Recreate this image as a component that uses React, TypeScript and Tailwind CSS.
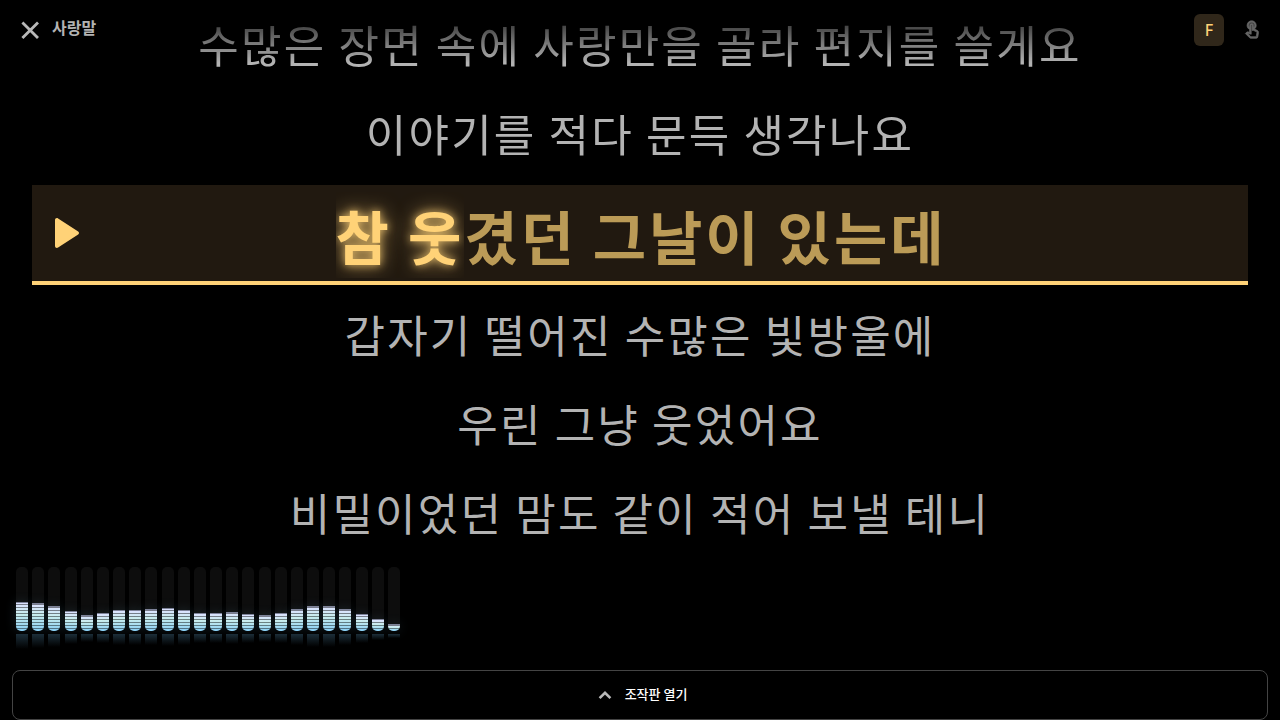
const before = ["수많은 장면 속에 사랑만을 골라 편지를 쓸게요", "이야기를 적다 문득 생각나요"];
const after = ["갑자기 떨어진 수많은 빛방울에", "우린 그냥 웃었어요", "비밀이었던 맘도 같이 적어 보낼 테니"];
const levels = [29, 28, 25, 20, 16, 18, 21, 21, 22, 23, 21, 18, 18, 19, 17, 16, 18, 22, 25, 25, 22, 17, 12, 7];

function CloseIcon() {
  return (
    <svg className="size-7" viewBox="0 0 28 28" fill="none" stroke="currentColor" strokeWidth="2.8" aria-hidden="true">
      <path d="M6.4 6.4l15.6 15.6M22 6.4L6.4 22" />
    </svg>
  );
}

function ChevronUpIcon() {
  return (
    <svg className="size-6 text-[#b8b8b8]" viewBox="0 0 24 24" fill="none" stroke="currentColor" strokeWidth="2.6" aria-hidden="true">
      <path d="M6.6 15.2l5.4-5.4 5.4 5.4" />
    </svg>
  );
}

function TouchIcon() {
  return (
    <svg className="size-5" viewBox="0 0 24 24" fill="currentColor" stroke="currentColor" strokeWidth="0.8" aria-hidden="true">
      <path d="M18.19 12.44l-3.24-1.62c1.29-1 2.12-2.56 2.12-4.32 0-3.03-2.47-5.5-5.5-5.5s-5.5 2.47-5.5 5.5c0 2.13 1.22 3.98 3 4.89v3.26c-2.15-.46-2.02-.44-2.26-.44-.53 0-1.03.21-1.41.59L4 16.22l5.09 5.09c.43.44 1.03.69 1.65.69h6.3c.98 0 1.81-.7 1.97-1.67l.8-4.71c.22-1.3-.43-2.58-1.62-3.18zm-.35 2.85l-.8 4.71h-6.3c-.09 0-.17-.04-.24-.1l-3.68-3.68 4.25.89V6.5c0-.28.22-.5.5-.5s.5.22.5.5v6h1.76l3.46 1.73c.4.2.62.63.55 1.06zM8.07 6.5c0-1.93 1.57-3.5 3.5-3.5s3.5 1.57 3.5 3.5c0 .95-.38 1.81-1 2.44V6.5c0-1.38-1.12-2.5-2.5-2.5s-2.5 1.12-2.5 2.5v2.44c-.62-.63-1-1.49-1-2.44z" />
    </svg>
  );
}

function Line({ text }: { text: string }) {
  return (
    <p className="h-[89px] text-center text-[44px] leading-[83px] tracking-wider whitespace-nowrap text-[#b3b3b3]">
      {text}
    </p>
  );
}

function ActiveLine() {
  return (
    <div className="relative mt-1 mb-2 flex h-[100px] items-center justify-center border-b-4 border-[#ffd277] bg-[#211910] pt-1 pl-0.5">
      <svg className="absolute top-[33px] left-[23px] h-[30px] w-6" viewBox="0 0 24 30" aria-hidden="true">
        <path d="M0 2C0 .3 1.7-.5 3.1.4l19.7 12.8c1.6 1 1.6 2.6 0 3.6L3.1 29.6C1.7 30.5 0 29.7 0 28z" fill="#ffd277" />
      </svg>
      <p className="text-[58px] leading-[86px] font-bold tracking-wider whitespace-nowrap text-[#bb9b57]">
        <span className="inline-block overflow-hidden align-top text-[#ffd277] [text-shadow:0_0_8px_#ffd277cc,0_0_20px_#ffd277b3]">
          참 웃
        </span>
        겼던 그날이 있는데
      </p>
    </div>
  );
}

function Spectrum() {
  return (
    <div className="relative ml-4 flex h-[82px] w-96 justify-between" role="img" aria-label="오디오 스펙트럼">
      {levels.map((level, i) => (
        <div key={i} className="flex w-3 flex-col">
          <div className="flex h-16 items-end rounded-[5px] bg-[#0d0d0d]">
            <div
              className="w-full overflow-hidden rounded-b-[5px] border-t border-[#7d8298] bg-linear-to-t from-[#87cdf3] via-[#c9eeee] via-60% to-[#dce2ff] shadow-[0_0_12px_#87cdf326]"
              style={{ height: level }}
            >
              <div className="h-full bg-[repeating-linear-gradient(to_top,transparent_0_2px,#00000073_2px_3px)]" />
            </div>
          </div>
          <div
            className="mt-[3px] bg-linear-to-b from-[#1c2e39] to-transparent"
            style={{ height: Math.round(level / 2) }}
          />
        </div>
      ))}
    </div>
  );
}

export default function App() {
  return (
    <div className="relative flex h-screen flex-col overflow-hidden bg-black font-['Noto_Sans_CJK_KR',sans-serif] text-white">
      <header className="absolute inset-x-0 top-0 z-10 flex items-start justify-between pt-3.5 pr-3 pl-4">
        <div className="flex items-center gap-2">
          <button type="button" aria-label="닫기" className="flex h-8 items-center text-[#b8b8b8]">
            <CloseIcon />
          </button>
          <h1 className="pb-1.5 text-base leading-6 font-bold text-[#b3b3b3]">사랑말</h1>
        </div>
        <div className="flex items-center gap-3">
          <button
            type="button"
            className="h-8 w-[30px] rounded-md bg-[#30271a] font-['Noto_Sans',sans-serif] text-base font-medium text-[#ffd277]"
          >
            F
          </button>
          <button type="button" aria-label="터치" className="flex size-8 items-center justify-center text-[#666666]">
            <TouchIcon />
          </button>
        </div>
      </header>

      <main className="min-h-0 flex-1 px-8 pt-[3px]">
        <div className="[mask-image:linear-gradient(to_bottom,transparent,black_60px)]">
          {before.map((text) => (
            <Line key={text} text={text} />
          ))}
        </div>
        <ActiveLine />
        {after.map((text) => (
          <Line key={text} text={text} />
        ))}
      </main>

      <Spectrum />

      <div className="mt-[21px] px-3">
        <button
          type="button"
          className="flex h-[50px] w-full items-center justify-center gap-2 rounded-lg border border-[#444444] text-[13px] font-medium text-white"
        >
          <ChevronUpIcon />
          <span className="pb-0.5">조작판 열기</span>
        </button>
      </div>
    </div>
  );
}
